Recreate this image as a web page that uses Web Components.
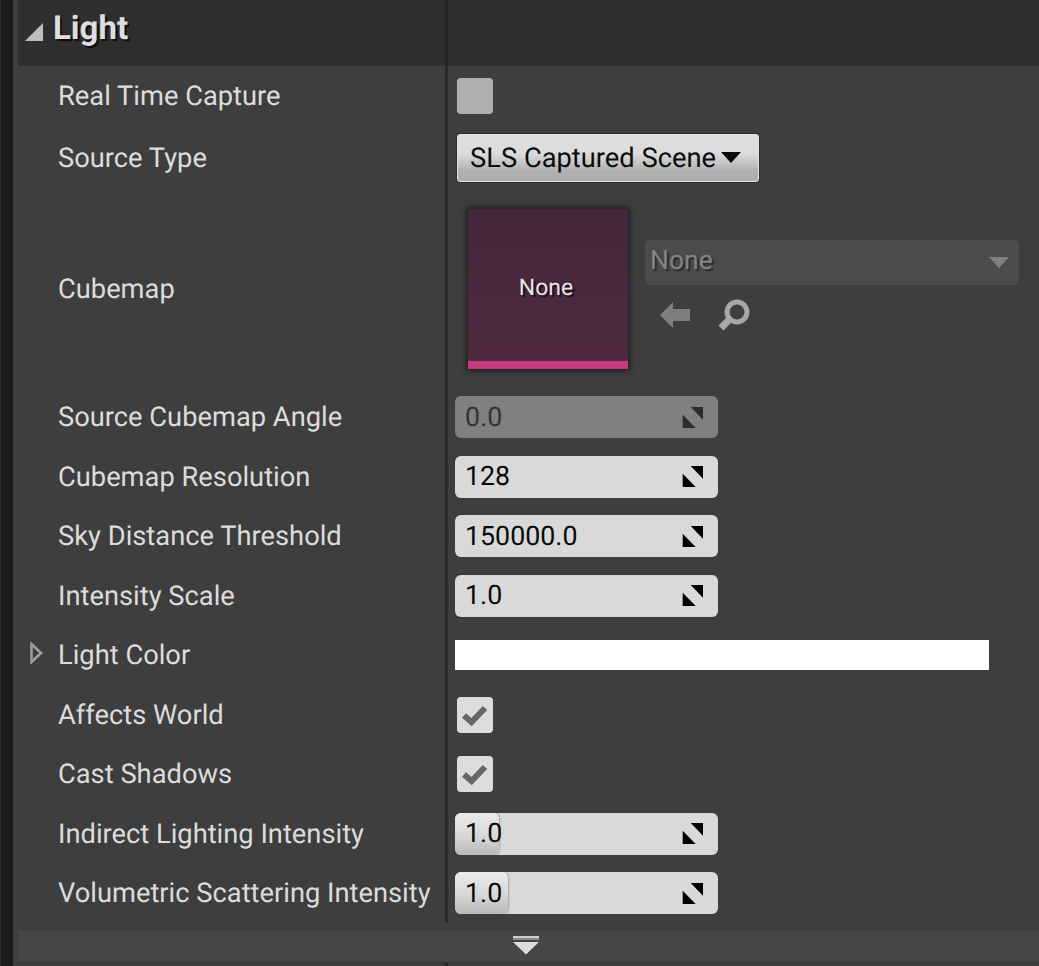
<!DOCTYPE html>
<html>
<head>
<meta charset="utf-8">
<title>Light</title>
<style>
  html, body { margin: 0; height: 100%; background: #3e3e3e; overflow: hidden; }
  body { font-family: Roboto, "Liberation Sans", sans-serif; text-rendering: geometricPrecision; }
</style>
</head>
<body>
<details-panel>
  <detail-category label="Light">
    <detail-row label="Real Time Capture" height="60"><ue-checkbox></ue-checkbox></detail-row>
    <detail-row label="Source Type" height="63"><ue-combo>SLS Captured Scene</ue-combo></detail-row>
    <detail-row label="Cubemap" height="198.5" style="--label-top: 2px"><ue-asset></ue-asset></detail-row>
    <detail-row label="Source Cubemap Angle"><ue-number value="0.0" disabled></ue-number></detail-row>
    <detail-row label="Cubemap Resolution"><ue-number value="128"></ue-number></detail-row>
    <detail-row label="Sky Distance Threshold"><ue-number value="150000.0"></ue-number></detail-row>
    <detail-row label="Intensity Scale"><ue-number value="1.0"></ue-number></detail-row>
    <detail-row label="Light Color" expandable><ue-color></ue-color></detail-row>
    <detail-row label="Affects World"><ue-checkbox checked></ue-checkbox></detail-row>
    <detail-row label="Cast Shadows"><ue-checkbox checked></ue-checkbox></detail-row>
    <detail-row label="Indirect Lighting Intensity"><ue-number value="1.0" fill="44"></ue-number></detail-row>
    <detail-row label="Volumetric Scattering Intensity"><ue-number value="1.0" fill="53"></ue-number></detail-row>
  </detail-category>
</details-panel>

<script>
class DetailsPanel extends HTMLElement {
  constructor(){
    super()
    this.attachShadow({mode: 'open'}).innerHTML = /* html */`
      <style>
        :host { display: flex; width: 1039px; height: 966px; background: #3e3e3e; overflow: hidden; }
        .gutter { flex: none; width: 13px; background: #1c1c1c; border-left: 1px solid #2c2c2c; box-sizing: border-box; }
        .body { flex: none; width: 1021px; margin-left: 5px; display: flex; flex-direction: column; }
        .footer { flex: none; height: 34px; margin-top: 6px; background: #464646; border-top: 1px solid #383838;
          border-bottom: 1px solid #343434; display: flex; align-items: center; justify-content: center; box-sizing: border-box; }
        .footer svg { display: block; margin-left: -5px; margin-top: -1px; }
        .tick { flex: none; width: 3px; height: 3px; margin-left: 427px; background: #2a2a2a; }
      </style>
      <div class="gutter"></div>
      <div class="body">
        <slot></slot>
        <div class="footer">
          <svg width="26" height="19" viewBox="0 0 26 19">
            <rect x="0" y="0" width="26" height="2" fill="#cfcfcf"/>
            <rect x="0" y="2" width="26" height="2" fill="#8c8c8c"/>
            <path d="M0 6h26L13 18.5z" fill="#dcdcdc"/>
          </svg>
        </div>
        <div class="tick"></div>
      </div>`
  }
}
customElements.define('details-panel', DetailsPanel)

class DetailCategory extends HTMLElement {
  constructor(){
    super()
    this.attachShadow({mode: 'open'}).innerHTML = /* html */`
      <style>
        :host { display: block; }
        header { height: 66px; background: #2f2f2f; display: grid; grid-template-columns: 430px 1fr; }
        .title { display: flex; align-items: center; gap: 10px; padding: 0 0 9px 7px; border-right: 3px solid #222; box-sizing: border-box; }
        .title svg { flex: none; margin-top: 6px; }
        .title span { font-size: 33px; font-weight: 700; color: #dedede; text-shadow: 2px 2px 1px #0c0c0c; line-height: 1; }
      </style>
      <header>
        <div class="title">
          <svg width="18" height="18" viewBox="0 0 18 18"><path d="M18 0V18H0z" fill="#bdbdbd"/></svg>
          <span></span>
        </div>
        <div></div>
      </header>
      <slot></slot>`
    this.shadowRoot.querySelector('span').textContent = this.getAttribute('label')
  }
}
customElements.define('detail-category', DetailCategory)

class DetailRow extends HTMLElement {
  constructor(){
    super()
    const arrow = this.hasAttribute('expandable')
      ? `<svg width="14" height="22" viewBox="0 0 14 22"><path d="M2.5 2L12 11L2.5 20z" fill="none" stroke="#9c9c9c" stroke-width="2.6"/></svg>`
      : ''
    this.attachShadow({mode: 'open'}).innerHTML = /* html */`
      <style>
        :host { display: grid; grid-template-columns: 430px 1fr; height: ${this.getAttribute('height') || 59.5}px; }
        .name { position: relative; display: flex; align-items: center; padding: var(--label-top, 0) 0 0 40px; border-right: 3px solid #2a2a2a;
          box-sizing: border-box; color: #dcdcdc; font-size: 27.3px; white-space: nowrap; }
        .name svg { position: absolute; left: 11px; top: 50%; margin-top: -13px; }
        .value { display: flex; align-items: center; padding-left: 7px; min-width: 0; }
      </style>
      <div class="name">${arrow}<span></span></div>
      <div class="value"><slot></slot></div>`
    this.shadowRoot.querySelector('span').textContent = this.getAttribute('label')
  }
}
customElements.define('detail-row', DetailRow)

class UeCheckbox extends HTMLElement {
  constructor(){
    super()
    const checked = this.hasAttribute('checked')
    this.attachShadow({mode: 'open'}).innerHTML = /* html */`
      <style>
        :host { display: block; width: 36px; height: 36px; margin-left: 2px; border-radius: 4px; background: ${checked ? '#dcdcdc' : '#afafaf'}; }
        svg { display: block; }
      </style>
      ${checked ? `<svg width="36" height="36" viewBox="0 0 36 36"><path d="M7 18.5L14.5 25L28 11" fill="none" stroke="#666" stroke-width="6"/></svg>` : ''}`
  }
}
customElements.define('ue-checkbox', UeCheckbox)

class UeCombo extends HTMLElement {
  constructor(){
    super()
    this.attachShadow({mode: 'open'}).innerHTML = /* html */`
      <style>
        :host { display: flex; align-items: center; box-sizing: border-box; width: 304px; height: 50px; margin-left: 1px; padding: 0 18px 0 13px; gap: 5px;
          border-radius: 4px; border: 1px solid #2c2c2c; box-shadow: inset 0 0 0 1px #e4e4e4;
          background: linear-gradient(#dedede 0, #dcdcdc 40%, #b0b0b0 78%, #adadad 100%);
          color: #0c0c0c; font-size: 27.3px; white-space: nowrap; }
        svg { flex: none; }
      </style>
      <slot></slot>
      <svg width="20" height="11" viewBox="0 0 20 11"><path d="M0 0H20L10 11z" fill="#0a0a0a"/></svg>`
  }
}
customElements.define('ue-combo', UeCombo)

class UeAsset extends HTMLElement {
  constructor(){
    super()
    this.attachShadow({mode: 'open'}).innerHTML = /* html */`
      <style>
        :host { display: flex; align-items: center; gap: 17px; }
        .thumb { flex: none; margin-left: 13px; width: 160px; height: 160px; display: flex; flex-direction: column; box-shadow: 0 0 5px 2px #1f1f1f; margin-top: 2px; }
        .face { flex: 1; display: flex; align-items: center; justify-content: center; background: linear-gradient(#44263a, #4f2a40);
          color: #e6e6e6; font-size: 23px; text-shadow: 2px 2px 1px #1d0c16; padding: 4px 4px 0 0; box-sizing: border-box; }
        .stripe { flex: none; height: 8px; background: #c63b7e; }
        .side { display: flex; flex-direction: column; gap: 8px; width: 374px; }
        .pick { display: flex; align-items: center; justify-content: space-between; height: 45px; padding: 0 10px 0 5px; border-radius: 5px;
          background: #4c4c4c; color: #848484; font-size: 26.5px; text-shadow: 2px 2px 1px #2a2a2a; box-sizing: border-box; }
        .pick span { margin-top: -3px; }
        .tools { display: flex; align-items: center; gap: 28px; padding-left: 15px; height: 44px; }
        svg { display: block; flex: none; }
      </style>
      <div class="thumb">
        <div class="face">None</div>
        <div class="stripe"></div>
      </div>
      <div class="side">
        <div class="pick">
          <span>None</span>
          <svg width="20" height="11" viewBox="0 0 20 11"><path d="M0 0H20L10 11z" fill="#808080"/></svg>
        </div>
        <div class="tools">
          <svg width="30" height="30" viewBox="0 0 30 30"><path d="M0 15L13 2V9H30V21H13V28z" fill="#7e7e7e"/></svg>
          <svg width="32" height="32" viewBox="0 0 32 32">
            <circle cx="19" cy="13" r="10" fill="none" stroke="#a8a8a8" stroke-width="5"/>
            <path d="M11 21L3 29" stroke="#a8a8a8" stroke-width="7"/>
          </svg>
        </div>
      </div>`
  }
}
customElements.define('ue-asset', UeAsset)

class UeNumber extends HTMLElement {
  constructor(){
    super()
    const disabled = this.hasAttribute('disabled')
    const fill = this.getAttribute('fill')
    const ink = disabled ? '#2c2c2c' : '#000'
    this.attachShadow({mode: 'open'}).innerHTML = /* html */`
      <style>
        :host { position: relative; display: flex; align-items: center; justify-content: space-between; box-sizing: border-box;
          width: 263px; height: 42px; padding: 0 15px 0 10px; border-radius: 6px; overflow: hidden;
          background: ${disabled ? '#808080' : '#d9d9d9'}; color: ${disabled ? '#333' : '#0a0a0a'};
          font-size: 26.8px; }
        .fill { position: absolute; left: 0; top: 0; bottom: 0; border-radius: 0 6px 6px 0; box-shadow: 1px 0 2px #a4a4a4;
          background: linear-gradient(#ececec, #d4d4d4 60%, #b8b8b8); }
        span { position: relative; margin-top: -1px; }
        svg { position: relative; display: block; flex: none; }
      </style>
      ${fill ? `<div class="fill" style="width:${fill}px"></div>` : ''}
      <span></span>
      <svg width="21" height="21" viewBox="0 0 21 21">
        <path d="M8.7 0H21V12.7z" fill="${ink}"/>
        <path d="M0.7 7.7L13.7 21H0.7z" fill="${ink}"/>
      </svg>`
    this.shadowRoot.querySelector('span').textContent = this.getAttribute('value')
  }
}
customElements.define('ue-number', UeNumber)

class UeColor extends HTMLElement {
  constructor(){
    super()
    this.attachShadow({mode: 'open'}).innerHTML = `<style>:host { display: block; width: 534px; height: 30px; background: #fff; }</style>`
  }
}
customElements.define('ue-color', UeColor)
</script>
</body>
</html>
